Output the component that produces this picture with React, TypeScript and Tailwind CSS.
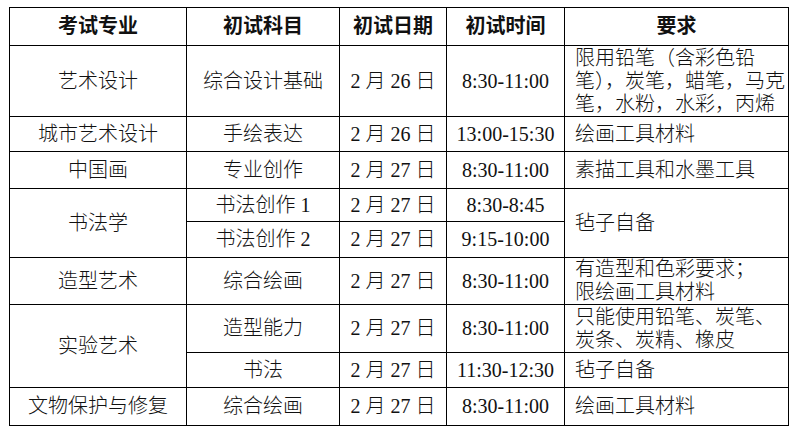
const font = { fontFamily: '"Liberation Serif", "Noto Sans CJK SC", serif' };

const cell = 'border border-black align-middle p-0 leading-[23px]';
const c = `${cell} text-center`;
const l = `${cell} text-left pl-[10px] pr-0 whitespace-nowrap`;

export default function App() {
  return (
    <div className="w-[802px] h-[432px] bg-white pl-[9px] pt-[7px] text-[20px] text-[#111]" style={font}>
      <table className="table-fixed border-collapse w-[779px]">
        <colgroup>
          <col className="w-[177px]" />
          <col className="w-[153px]" />
          <col className="w-[107px]" />
          <col className="w-[118px]" />
          <col className="w-[224px]" />
        </colgroup>
        <thead>
          <tr className="h-[38px]">
            <th className={`${c} font-bold`}>考试专业</th>
            <th className={`${c} font-bold`}>初试科目</th>
            <th className={`${c} font-bold`}>初试日期</th>
            <th className={`${c} font-bold`}>初试时间</th>
            <th className={`${c} font-bold`}>要求</th>
          </tr>
        </thead>
        <tbody className="font-light">
          <tr className="h-[71px]">
            <td className={c}>艺术设计</td>
            <td className={c}>综合设计基础</td>
            <td className={c}>2 月 26 日</td>
            <td className={c}>8:30-11:00</td>
            <td className={l}>
              限用铅笔（含彩色铅
              <br />
              笔），炭笔，蜡笔，马克
              <br />
              笔，水粉，水彩，丙烯
            </td>
          </tr>
          <tr className="h-[35px]">
            <td className={c}>城市艺术设计</td>
            <td className={c}>手绘表达</td>
            <td className={c}>2 月 26 日</td>
            <td className={c}>13:00-15:30</td>
            <td className={l}>绘画工具材料</td>
          </tr>
          <tr className="h-[37px]">
            <td className={c}>中国画</td>
            <td className={c}>专业创作</td>
            <td className={c}>2 月 27 日</td>
            <td className={c}>8:30-11:00</td>
            <td className={l}>素描工具和水墨工具</td>
          </tr>
          <tr className="h-[33px]">
            <td className={c} rowSpan={2}>书法学</td>
            <td className={c}>书法创作 1</td>
            <td className={c}>2 月 27 日</td>
            <td className={c}>8:30-8:45</td>
            <td className={l} rowSpan={2}>毡子自备</td>
          </tr>
          <tr className="h-[36px]">
            <td className={c}>书法创作 2</td>
            <td className={c}>2 月 27 日</td>
            <td className={c}>9:15-10:00</td>
          </tr>
          <tr className="h-[47px]">
            <td className={c}>造型艺术</td>
            <td className={c}>综合绘画</td>
            <td className={c}>2 月 27 日</td>
            <td className={c}>8:30-11:00</td>
            <td className={l}>
              有造型和色彩要求；
              <br />
              限绘画工具材料
            </td>
          </tr>
          <tr className="h-[48px]">
            <td className={c} rowSpan={2}>实验艺术</td>
            <td className={c}>造型能力</td>
            <td className={c}>2 月 27 日</td>
            <td className={c}>8:30-11:00</td>
            <td className={l}>
              只能使用铅笔、炭笔、
              <br />
              炭条、炭精、橡皮
            </td>
          </tr>
          <tr className="h-[35px]">
            <td className={c}>书法</td>
            <td className={c}>2 月 27 日</td>
            <td className={c}>11:30-12:30</td>
            <td className={l}>毡子自备</td>
          </tr>
          <tr className="h-[38px]">
            <td className={c}>文物保护与修复</td>
            <td className={c}>综合绘画</td>
            <td className={c}>2 月 27 日</td>
            <td className={c}>8:30-11:00</td>
            <td className={l}>绘画工具材料</td>
          </tr>
        </tbody>
      </table>
    </div>
  );
}
